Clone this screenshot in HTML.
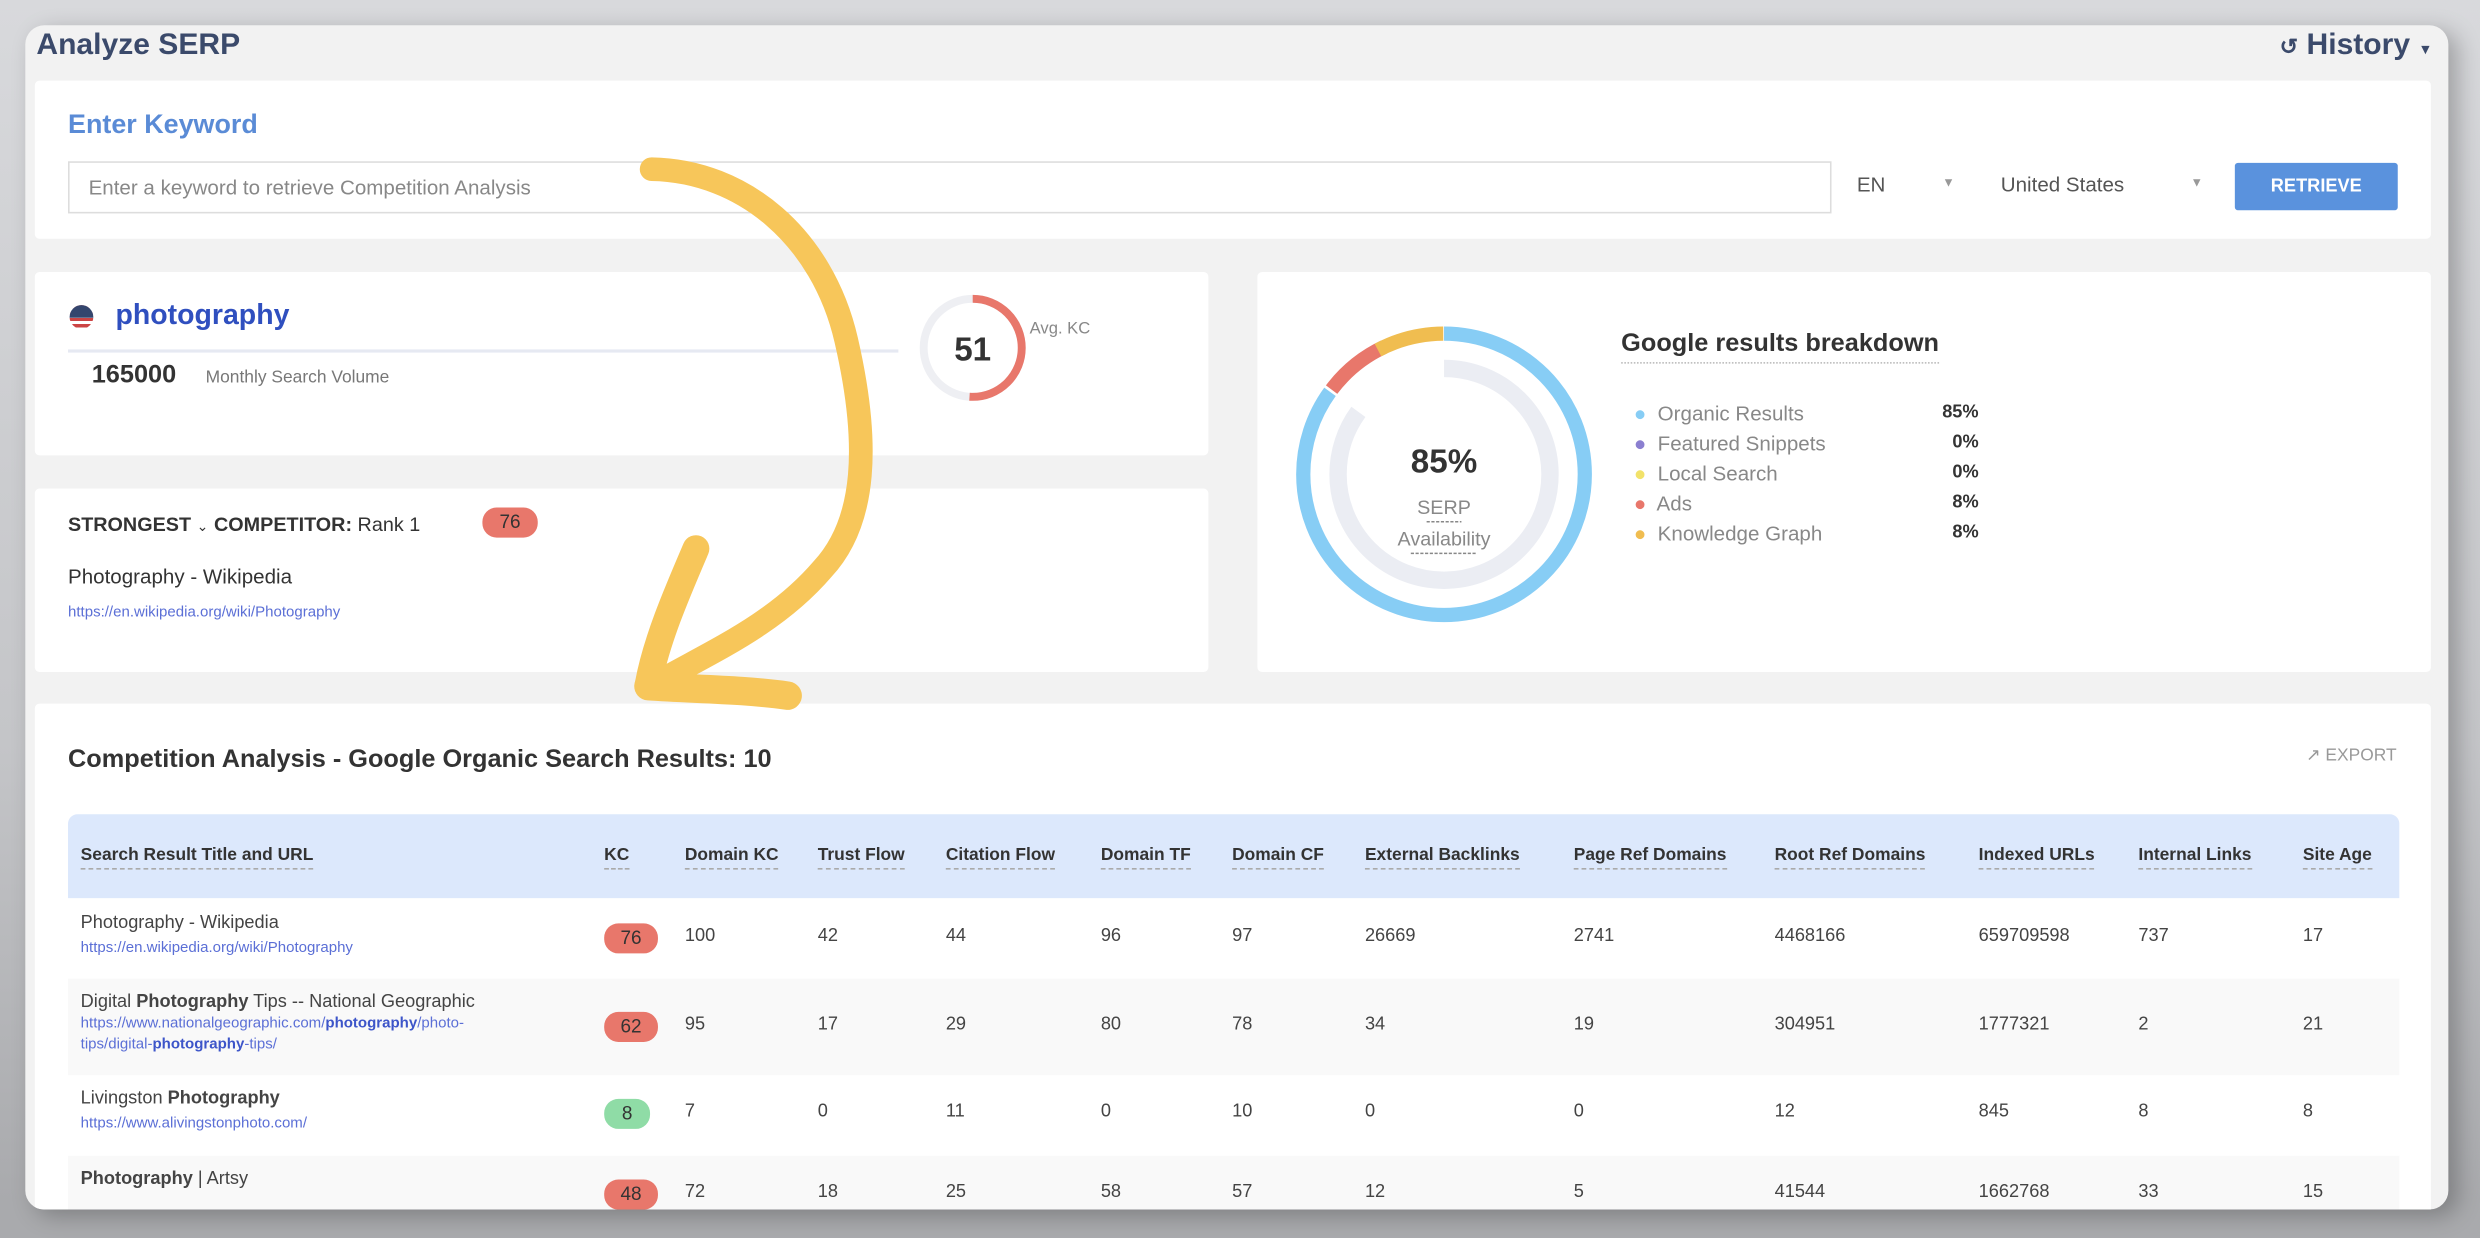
<!DOCTYPE html>
<html><head><meta charset="utf-8">
<style>
*{box-sizing:border-box;margin:0;padding:0}
html,body{width:2480px;height:1238px;overflow:hidden;background:#a9aaad}
#s{position:absolute;left:0;top:0;width:1568px;height:783px;transform:scale(1.58163,1.5811);transform-origin:0 0;font-family:"Liberation Sans",sans-serif;color:#333;
background:linear-gradient(#d8d9dc,#c4c5c8 60%,#a9aaad 97%)}
.a{position:absolute;white-space:nowrap}
.win{position:absolute;left:16px;top:16px;width:1532px;height:749px;background:#f2f2f2;border-radius:12px;overflow:hidden;box-shadow:6px 4px 14px rgba(0,0,0,.25)}
.card{position:absolute;background:#fff;border-radius:3px}
.b{font-weight:bold}
.badge{position:absolute;height:19px;border-radius:9px;color:#333;font-size:12px;text-align:center;line-height:19px}
.red{background:#e8776b}.grn{background:#8fdca6}
.th{position:absolute;top:20px;font-size:11px;font-weight:bold;color:#333;border-bottom:1px dashed #aaa;padding-bottom:2px}
.td{position:absolute;font-size:11.5px;color:#444}
.url{color:#5b6fd6;font-size:9.5px}
.url b{color:#3d55c9}
</style></head><body><div id="s">
<div class="win">
 <div class="a b" style="left:7px;top:2px;font-size:19px;color:#3b4a6b">Analyze SERP</div>
 <div class="a b" style="right:10px;top:2px;font-size:19px;color:#3b4a6b"><span style="font-size:14px">&#x21BA;</span> History <span style="font-size:9px">&#9660;</span></div>
 <div class="card" style="left:6px;top:35px;width:1515px;height:100px">
  <div class="a b" style="left:21px;top:18px;font-size:17px;color:#5a8bd6">Enter Keyword</div>
  <div class="a" style="left:21px;top:51px;width:1115px;height:33px;border:1px solid #ddd;font-size:13px;color:#888;padding:8px 12px">Enter a keyword to retrieve Competition Analysis</div>
  <div class="a" style="left:1152px;top:58px;font-size:13px;color:#555">EN</div>
  <div class="a" style="left:1206px;top:60px;font-size:8px;color:#999">&#9660;</div>
  <div class="a" style="left:1243px;top:58px;font-size:13px;color:#555">United States</div>
  <div class="a" style="left:1363px;top:60px;font-size:8px;color:#999">&#9660;</div>
  <div class="a b" style="left:1391px;top:52px;width:103px;height:30px;background:#5a92dd;border-radius:2px;color:#fff;font-size:11.5px;text-align:center;line-height:30px">RETRIEVE</div>
 </div>
 <div class="card" style="left:6px;top:156px;width:742px;height:116px">
  <div class="a" style="left:22px;top:21px;width:15px;height:15px;border-radius:50%;background:repeating-linear-gradient(#c44 0 2px,#fff 2px 4px)"><div style="width:15px;height:8px;background:#34466e;border-radius:8px 8px 0 0"></div></div>
  <div class="a b" style="left:51px;top:17px;font-size:18px;color:#2f4fbf">photography</div>
  <div class="a" style="left:21px;top:49px;width:525px;height:2px;background:#e6e9f2"></div>
  <div class="a b" style="left:36px;top:57px;font-size:16px;color:#333">165000</div>
  <div class="a" style="left:108px;top:61px;font-size:11px;color:#777">Monthly Search Volume</div>
  <svg class="a" style="left:558px;top:13px" width="70" height="70" viewBox="0 0 70 70">
   <circle cx="35" cy="35" r="31" fill="none" stroke="#eeeff3" stroke-width="5"/>
   <circle cx="35" cy="35" r="31" fill="none" stroke="#e8776b" stroke-width="5" stroke-dasharray="99.3 200" transform="rotate(-90 35 35)"/>
   <text x="35" y="43" text-anchor="middle" font-family="Liberation Sans" font-weight="bold" font-size="21" fill="#333">51</text>
  </svg>
  <div class="a" style="left:629px;top:30px;font-size:10.5px;color:#888">Avg. KC</div>
 </div>
 <div class="card" style="left:6px;top:293px;width:742px;height:116px">
  <div class="a" style="left:21px;top:16px;font-size:12.5px"><b>STRONGEST</b> <span style="font-size:9px">&#8964;</span> <b>COMPETITOR:</b> Rank 1</div>
  <div class="badge red" style="left:283px;top:12px;width:35px;font-size:12px">76</div>
  <div class="a" style="left:21px;top:48px;font-size:13px;color:#333">Photography - Wikipedia</div>
  <div class="a url" style="left:21px;top:73px">https://en.wikipedia.org/wiki/Photography</div>
 </div>
 <div class="card" style="left:779px;top:156px;width:742px;height:253px">
  <svg class="a" style="left:18px;top:28px" width="200" height="200" viewBox="0 0 200 200">
   <circle cx="100" cy="100" r="67" fill="none" stroke="#ebedf3" stroke-width="11" stroke-dasharray="357.8 500" transform="rotate(-90 100 100)"/>
   <circle cx="100" cy="100" r="89" fill="none" stroke="#87cdf5" stroke-width="9" stroke-dasharray="475 600" transform="rotate(-90 100 100)"/>
   <circle cx="100" cy="100" r="89" fill="none" stroke="#e8776b" stroke-width="9" stroke-dasharray="43 600" transform="rotate(217 100 100)"/>
   <circle cx="100" cy="100" r="89" fill="none" stroke="#f0bd50" stroke-width="9" stroke-dasharray="43 600" transform="rotate(242 100 100)"/>
   <text x="100" y="99" text-anchor="middle" font-family="Liberation Sans" font-weight="bold" font-size="21" fill="#333">85%</text>
   <text x="100" y="125" text-anchor="middle" font-family="Liberation Sans" font-size="12.5" fill="#888">SERP</text>
   <text x="100" y="145" text-anchor="middle" font-family="Liberation Sans" font-size="12.5" fill="#888">Availability</text>
   <line x1="89" y1="130" x2="111" y2="130" stroke="#888" stroke-dasharray="2 1"/>
   <line x1="79" y1="150" x2="121" y2="150" stroke="#888" stroke-dasharray="2 1"/>
  </svg>
  <div class="a b" style="left:230px;top:37px;font-size:16px;color:#333;border-bottom:1.5px dotted #bbb;padding-bottom:2px">Google results breakdown</div>
  <div class="a" style="left:238px;top:80px;font-size:13px;color:#888;line-height:19px">
   <div><span style="color:#87cdf5">&#9679;</span>&nbsp; Organic Results</div>
   <div><span style="color:#8b7fd0">&#9679;</span>&nbsp; Featured Snippets</div>
   <div><span style="color:#f2e26a">&#9679;</span>&nbsp; Local Search</div>
   <div><span style="color:#e8776b">&#9679;</span>&nbsp; Ads</div>
   <div><span style="color:#f0bd50">&#9679;</span>&nbsp; Knowledge Graph</div>
  </div>
  <div class="a b" style="left:384px;top:80px;width:72px;text-align:right;font-size:11.5px;color:#333;line-height:19px">85%<br>0%<br>0%<br>8%<br>8%</div>
 </div>
 <div class="card" style="left:6px;top:429px;width:1515px;height:340px">
  <div class="a b" style="left:21px;top:27px;font-size:16px;color:#333">Competition Analysis - Google Organic Search Results: 10</div>
  <div class="a" style="left:1436px;top:26px;font-size:11px;color:#999">&#x2197;&#xFE0E; EXPORT</div>
  <div class="a" style="left:21px;top:70px;width:1474px;height:53px;background:#dce8fc;border-radius:6px 6px 0 0">
   <div class="th" style="left:8px">Search Result Title and URL</div>
   <div class="th" style="left:339px">KC</div>
   <div class="th" style="left:390px">Domain KC</div>
   <div class="th" style="left:474px">Trust Flow</div>
   <div class="th" style="left:555px">Citation Flow</div>
   <div class="th" style="left:653px">Domain TF</div>
   <div class="th" style="left:736px">Domain CF</div>
   <div class="th" style="left:820px">External Backlinks</div>
   <div class="th" style="left:952px">Page Ref Domains</div>
   <div class="th" style="left:1079px">Root Ref Domains</div>
   <div class="th" style="left:1208px">Indexed URLs</div>
   <div class="th" style="left:1309px">Internal Links</div>
   <div class="th" style="left:1413px">Site Age</div>
  </div>
  <div class="a" style="left:21px;top:174px;width:1474px;height:61px;background:#f9f9f9"></div>
  <div class="a" style="left:21px;top:286px;width:1474px;height:60px;background:#f9f9f9"></div>
  <div class="td" style="left:29px;top:133px">Photography - Wikipedia<div class="url" style="margin-top:4px">https://en.wikipedia.org/wiki/Photography</div></div>
  <div class="td" style="left:29px;top:183px">Digital <b>Photography</b> Tips -- National Geographic<div class="url" style="margin-top:1px;line-height:13px">https://www.nationalgeographic.com/<b>photography</b>/photo-<br>tips/digital-<b>photography</b>-tips/</div></div>
  <div class="td" style="left:29px;top:244px">Livingston <b>Photography</b><div class="url" style="margin-top:4px">https://www.alivingstonphoto.com/</div></div>
  <div class="td" style="left:29px;top:295px"><b>Photography</b> | Artsy</div>
  <div class="badge red" style="left:360px;top:139px;width:34px">76</div>
  <div class="badge red" style="left:360px;top:195px;width:34px">62</div>
  <div class="badge grn" style="left:360px;top:250px;width:29px">8</div>
  <div class="badge red" style="left:360px;top:301px;width:34px">48</div>
  <div class="a" style="left:0;top:141px;width:100%;font-size:11.5px;color:#444">
   <span class="a" style="left:411px">100</span><span class="a" style="left:495px">42</span><span class="a" style="left:576px">44</span><span class="a" style="left:674px">96</span><span class="a" style="left:757px">97</span><span class="a" style="left:841px">26669</span><span class="a" style="left:973px">2741</span><span class="a" style="left:1100px">4468166</span><span class="a" style="left:1229px">659709598</span><span class="a" style="left:1330px">737</span><span class="a" style="left:1434px">17</span>
  </div>
  <div class="a" style="left:0;top:197px;width:100%;font-size:11.5px;color:#444">
   <span class="a" style="left:411px">95</span><span class="a" style="left:495px">17</span><span class="a" style="left:576px">29</span><span class="a" style="left:674px">80</span><span class="a" style="left:757px">78</span><span class="a" style="left:841px">34</span><span class="a" style="left:973px">19</span><span class="a" style="left:1100px">304951</span><span class="a" style="left:1229px">1777321</span><span class="a" style="left:1330px">2</span><span class="a" style="left:1434px">21</span>
  </div>
  <div class="a" style="left:0;top:252px;width:100%;font-size:11.5px;color:#444">
   <span class="a" style="left:411px">7</span><span class="a" style="left:495px">0</span><span class="a" style="left:576px">11</span><span class="a" style="left:674px">0</span><span class="a" style="left:757px">10</span><span class="a" style="left:841px">0</span><span class="a" style="left:973px">0</span><span class="a" style="left:1100px">12</span><span class="a" style="left:1229px">845</span><span class="a" style="left:1330px">8</span><span class="a" style="left:1434px">8</span>
  </div>
  <div class="a" style="left:0;top:303px;width:100%;font-size:11.5px;color:#444">
   <span class="a" style="left:411px">72</span><span class="a" style="left:495px">18</span><span class="a" style="left:576px">25</span><span class="a" style="left:674px">58</span><span class="a" style="left:757px">57</span><span class="a" style="left:841px">12</span><span class="a" style="left:973px">5</span><span class="a" style="left:1100px">41544</span><span class="a" style="left:1229px">1662768</span><span class="a" style="left:1330px">33</span><span class="a" style="left:1434px">15</span>
  </div>
 </div>
</div>
<svg class="a" style="left:0;top:0" width="1568" height="783" viewBox="0 0 1568 783">
 <g fill="none" stroke="#f7c65a" stroke-linecap="round" stroke-linejoin="round">
  <path d="M412 107 C470 108 520 150 535 215 C550 280 548 330 520 360 C490 395 450 412 415 432" stroke-width="15"/>
  <path d="M440 347 C428 375 415 405 410 432" stroke-width="17"/>
  <path d="M410 434 C440 436 470 436 498 440" stroke-width="18"/>
 </g>
</svg>
</div></body></html>
